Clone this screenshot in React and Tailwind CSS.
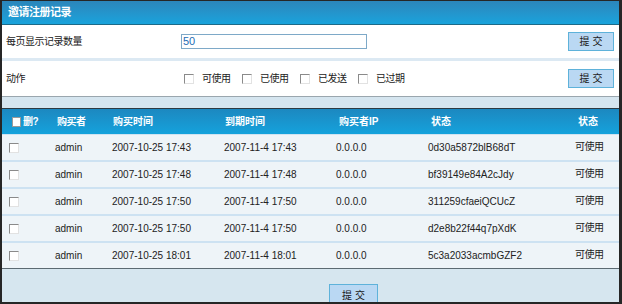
const rows = [
  ["2007-10-25 17:43", "2007-11-4 17:43", "0d30a5872blB68dT"],
  ["2007-10-25 17:48", "2007-11-4 17:48", "bf39149e84A2cJdy"],
  ["2007-10-25 17:50", "2007-11-4 17:50", "311259cfaeiQCUcZ"],
  ["2007-10-25 17:50", "2007-11-4 17:50", "d2e8b22f44q7pXdK"],
  ["2007-10-25 18:01", "2007-11-4 18:01", "5c3a2033acmbGZF2"],
];

function Box() {
  return (
    <span className="inline-block w-[10px] h-[10px] shrink-0 bg-white border border-t-[#8a8a8a] border-l-[#8a8a8a] border-b-[#e2e2e2] border-r-[#e2e2e2]" />
  );
}

function Btn() {
  return (
    <button className="w-[46px] h-[19px] bg-[#bad8f3] border border-[#5eb2da] text-[10px] leading-none text-[#1a1a1a] flex items-center justify-center">
      提 交
    </button>
  );
}

export default function App() {
  return (
    <div
      className="w-[622px] h-[304px] bg-white border-l-2 border-r-[3px] border-b-2 border-t border-[#262626] flex flex-col overflow-hidden text-[#222]"
      style={{ fontFamily: '"Liberation Sans", "Noto Sans CJK SC", sans-serif' }}
    >
      {/* Title bar */}
      <div className="h-[23px] bg-gradient-to-b from-[#2b86bb] to-[#18a3dc] flex items-center pl-[6px] text-white font-bold text-[11px] tracking-[-0.5px]">
        邀请注册记录
      </div>
      <div className="h-px bg-[#1c6a88]" />

      {/* Row 1 */}
      <div className="h-[33px] flex items-center">
        <div className="w-[179px] pl-[4px] text-[10px] tracking-[-0.5px]">每页显示记录数量</div>
        <div className="w-[186px] h-[15px] border border-[#7ea9c8] bg-white flex items-center pl-[1px] text-[11px] text-[#1f6db5]">
          50
        </div>
        <div className="ml-auto mr-[5px]">
          <Btn />
        </div>
      </div>
      <div className="h-[3px] bg-[#dce9f3]" />

      {/* Row 2 */}
      <div className="h-[35px] flex items-center">
        <div className="w-[182px] pl-[4px] text-[10px] tracking-[-0.5px]">动作</div>
        {["可使用", "已使用", "已发送", "已过期"].map((t) => (
          <div key={t} className="w-[58px] flex items-center">
            <Box />
            <span className="ml-[8px] text-[10px] tracking-[-0.5px]">{t}</span>
          </div>
        ))}
        <div className="ml-auto mr-[5px]">
          <Btn />
        </div>
      </div>
      <div className="h-px bg-[#9aa6ae]" />
      <div className="h-[11px] bg-[#d5e5ef]" />
      <div className="h-px bg-[#2e3a42]" />

      {/* Table header */}
      <div className="h-[25px] bg-gradient-to-b from-[#1c88c0] to-[#14a2dc] grid grid-cols-[53px_57px_112px_112px_92px_147px_1fr] items-center text-white font-bold text-[10px]">
        <div className="pl-[10px] flex items-center">
          <span className="inline-block w-[9px] h-[10px] bg-white border border-[#9a9a9a]" />
          <span className="ml-[2px] tracking-[-0.5px]">删?</span>
        </div>
        <div className="pl-[2px] tracking-[-0.5px]">购买者</div>
        <div className="pl-[1px]">购买时间</div>
        <div className="pl-[1px]">到期时间</div>
        <div className="pl-[3px]">购买者IP</div>
        <div className="pl-[3px]">状态</div>
        <div className="pl-[3px]">状态</div>
      </div>
      <div className="h-px bg-[#cfe3f1]" />

      {/* Rows */}
      {rows.map((r, i) => (
        <div
          key={i}
          className={`bg-[#eef4f8] grid grid-cols-[53px_57px_112px_112px_92px_147px_1fr] items-center text-[10px] text-[#222] ${i < 4 ? "h-[27px] border-b-2 border-[#cde2f2]" : "h-[25px]"}`}
        >
          <div className="pl-[7px] flex items-center">
            <Box />
          </div>
          <div>admin</div>
          <div>{r[0]}</div>
          <div>{r[1]}</div>
          <div>0.0.0.0</div>
          <div>{r[2]}</div>
          <div className="tracking-[-0.5px] -mt-[3px]">可使用</div>
        </div>
      ))}
      <div className="h-px bg-[#5c6a72]" />

      {/* Bottom */}
      <div className="flex-1 bg-[#d6e6ef] pl-[327px] pt-[15px] overflow-hidden">
        <button className="w-[49px] h-[22px] bg-[#bad8f3] border border-[#5eb2da] text-[10px] text-[#1a1a1a] flex items-start justify-center pt-[3px]">
          提 交
        </button>
      </div>
    </div>
  );
}
